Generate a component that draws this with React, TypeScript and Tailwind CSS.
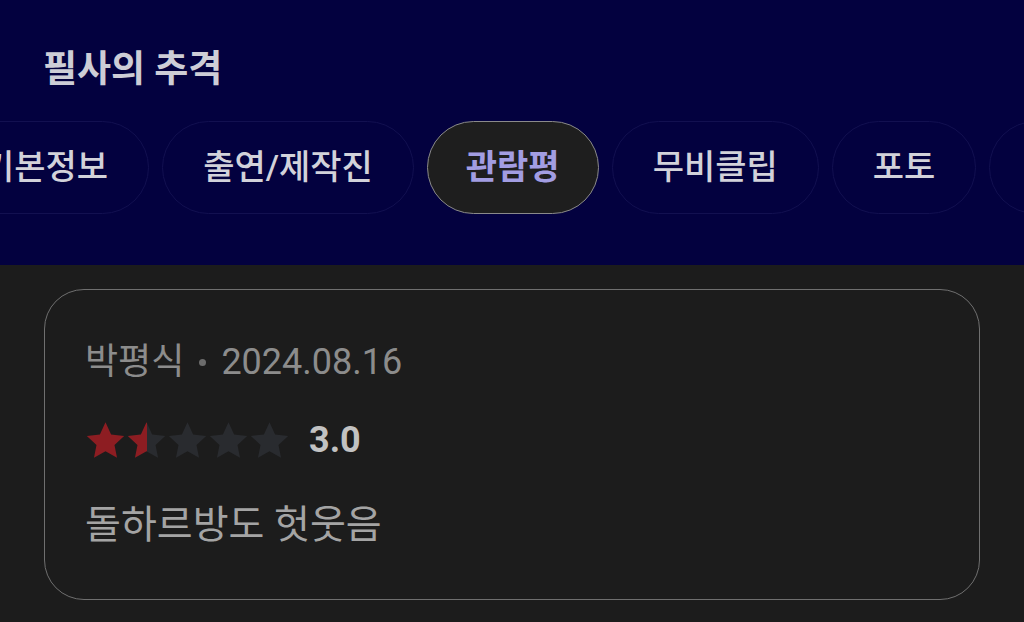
const TABS = [
  { label: '기본정보', active: false },
  { label: '출연/제작진', active: false },
  { label: '관람평', active: true },
  { label: '무비클립', active: false },
  { label: '포토', active: false },
  { label: '트레일러', active: false },
]

const Star = ({ fill }: { fill: 'full' | 'half' | 'empty' }) => {
  const id = 'half-star-grad'
  return (
    <svg width="41" height="39" viewBox="0 0 24 23">
      {fill === 'half' && (
        <defs>
          <linearGradient id={id}>
            <stop offset="50%" stopColor="#8d1d22" />
            <stop offset="50%" stopColor="#292b2f" />
          </linearGradient>
        </defs>
      )}
      <path
        d="M12 0.8l3.3 7.1 7.7 0.9-5.7 5.3 1.5 7.6L12 17.9l-6.8 3.8 1.5-7.6L1 8.8l7.7-0.9z"
        fill={fill === 'full' ? '#8d1d22' : fill === 'half' ? `url(#${id})` : '#292b2f'}
      />
    </svg>
  )
}

export default function App() {
  return (
    <div
      className="w-[1024px] h-[622px] overflow-hidden bg-[#1c1c1c]"
      style={{ fontFamily: 'Roboto, "Noto Sans CJK KR", sans-serif' }}
    >
      <div className="bg-[#03013f] h-[265px] pt-[44px]">
        <h1 className="pl-[43px] text-[37px] leading-[52px] font-bold text-[#cdcdd6]">필사의 추격</h1>
        {/* tab strip is scrolled sideways, first pill starts off screen */}
        <div className="mt-[25px] flex gap-[13px] ml-[-58px] whitespace-nowrap">
          {TABS.map((tab, idx) => (
            <div
              key={'tab' + idx}
              className={
                tab.active
                  ? 'shrink-0 h-[93px] px-[38px] flex items-center rounded-full bg-[#1e1e1e] border border-[#8a8a8a] text-[#a29de2] font-bold text-[34px]'
                  : 'shrink-0 h-[93px] px-[40px] flex items-center rounded-full bg-[#03013f] border border-[#121050] text-[#d2d2da] font-medium text-[34px]'
              }
            >
              {tab.label}
            </div>
          ))}
        </div>
      </div>

      <div className="px-[44px] pt-[24px]">
        <div className="h-[311px] rounded-[40px] border border-[#6f6f6f] px-[40px] pt-[46px]">
          <div className="flex items-center text-[36px] leading-[52px] text-[#8c8c8c]">
            <span>박평식</span>
            <span className="mx-[15px] w-[7px] h-[7px] rounded-full bg-[#6c6c6c]" />
            <span>2024.08.16</span>
          </div>
          <div className="mt-[25px] flex items-center">
            <div className="flex">
              <Star fill="full" />
              <Star fill="half" />
              <Star fill="empty" />
              <Star fill="empty" />
              <Star fill="empty" />
            </div>
            <span className="ml-[19px] text-[36px] font-bold text-[#c2c2c2]">3.0</span>
          </div>
          <p className="mt-[31px] text-[39px] leading-[54px] text-[#a4a4a4]">돌하르방도 헛웃음</p>
        </div>
      </div>
    </div>
  )
}
